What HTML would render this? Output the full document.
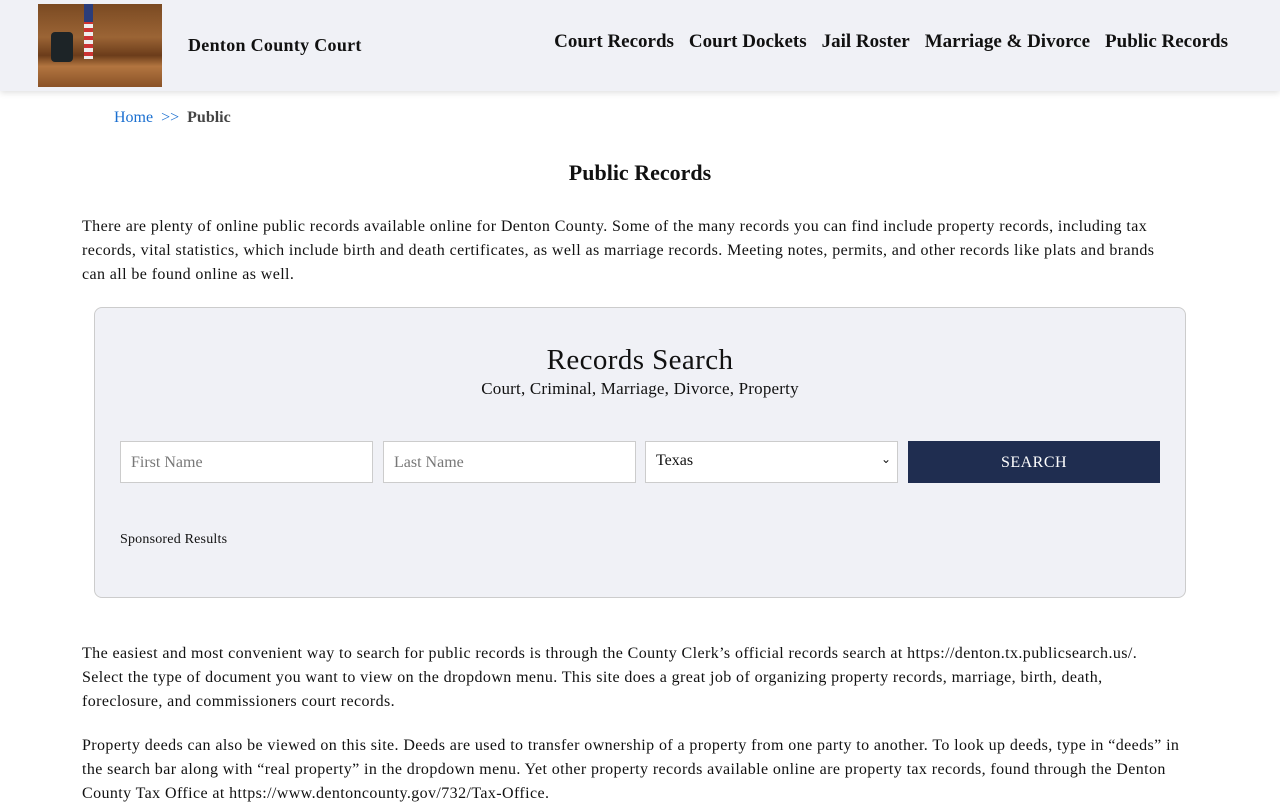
<!DOCTYPE html>
<html><head><meta charset="utf-8"><style>
*{box-sizing:border-box;margin:0;padding:0}
body{width:1280px;height:800px;overflow:hidden;background:#fff;font-family:"Liberation Serif",serif;color:#111}
.hdr{position:absolute;left:0;top:0;width:1280px;height:91px;background:#f0f1f6;box-shadow:0 2px 6px rgba(0,0,0,.12)}
.logo{position:absolute;left:38px;top:4px;width:124px;height:83px;background:linear-gradient(180deg,#7a4a22 0%,#9b6435 40%,#6b3c1a 62%,#b27540 75%,#8a5227 100%)}
.logo .chair{position:absolute;left:13px;top:28px;width:22px;height:30px;background:#1d2427;border-radius:4px}
.logo .flag{position:absolute;left:46px;top:0;width:9px;height:55px;background:repeating-linear-gradient(180deg,#c33 0 4px,#eee 4px 8px)}
.logo .flag:before{content:"";position:absolute;left:0;top:0;width:9px;height:18px;background:#2b3d7a}
.title{position:absolute;left:188px;top:35px;font-size:18px;font-weight:bold;letter-spacing:.3px}
.nav{position:absolute;right:52px;top:31px;font-size:19px;font-weight:bold}
.nav span{margin-left:15px}
.bc{position:absolute;left:114px;top:109px;font-size:16px}
.bc a{color:#1a6fd0;text-decoration:none}
h1{position:absolute;left:0;width:1280px;top:160px;text-align:center;font-size:22px}
p{position:absolute;left:82px;width:1120px;font-size:16px;line-height:24px;letter-spacing:.4px}
.box{position:absolute;left:94px;top:307px;width:1092px;height:291px;background:#f0f1f6;border:1px solid #ccc;border-radius:8px}
.box h2{position:absolute;top:36px;width:100%;text-align:center;font-weight:normal;font-size:29px;letter-spacing:.4px}
.box .sub{position:absolute;top:71px;width:100%;text-align:center;font-size:17px;letter-spacing:.2px}
.in{position:absolute;top:133px;width:253px;height:42px;background:#fff;border:1px solid #ccc;font-size:16px;color:#777;padding:12px 10px}
.btn{position:absolute;left:813px;top:133px;width:252px;height:42px;background:#1f2d50;color:#fff;text-align:center;line-height:44px;font-size:16px;letter-spacing:.5px}
.sp{position:absolute;left:25px;top:224px;font-size:14px;letter-spacing:.2px}
</style></head><body>
<div class="hdr"><div class="logo"><div class="flag"></div><div class="chair"></div></div>
<div class="title">Denton County Court</div>
<div class="nav"><span>Court Records</span><span>Court Dockets</span><span>Jail Roster</span><span>Marriage &amp; Divorce</span><span>Public Records</span></div></div>
<div class="bc"><a>Home</a>&nbsp;&nbsp;<a>&gt;&gt;</a>&nbsp;&nbsp;<b style="color:#444">Public</b></div>
<h1>Public Records</h1>
<p style="top:215px">There are plenty of online public records available online for Denton County. Some of the many records you can find include property records, including tax<br>records, vital statistics, which include birth and death certificates, as well as marriage records. Meeting notes, permits, and other records like plats and brands<br>can all be found online as well.</p>
<div class="box"><h2>Records Search</h2><div class="sub">Court, Criminal, Marriage, Divorce, Property</div>
<div class="in" style="left:25px">First Name</div><div class="in" style="left:288px">Last Name</div>
<div class="in" style="left:550px;color:#111;padding-top:10px">Texas<span style="position:absolute;right:6px;top:10px;font-size:12px">&#8964;</span></div>
<div class="btn">SEARCH</div><div class="sp">Sponsored Results</div></div>
<p style="top:642px">The easiest and most convenient way to search for public records is through the County Clerk’s official records search at https://denton.tx.publicsearch.us/.<br>Select the type of document you want to view on the dropdown menu. This site does a great job of organizing property records, marriage, birth, death,<br>foreclosure, and commissioners court records.</p>
<p style="top:734px">Property deeds can also be viewed on this site. Deeds are used to transfer ownership of a property from one party to another. To look up deeds, type in “deeds” in<br>the search bar along with “real property” in the dropdown menu. Yet other property records available online are property tax records, found through the Denton<br>County Tax Office at https://www.dentoncounty.gov/732/Tax-Office.</p>
</body></html>
